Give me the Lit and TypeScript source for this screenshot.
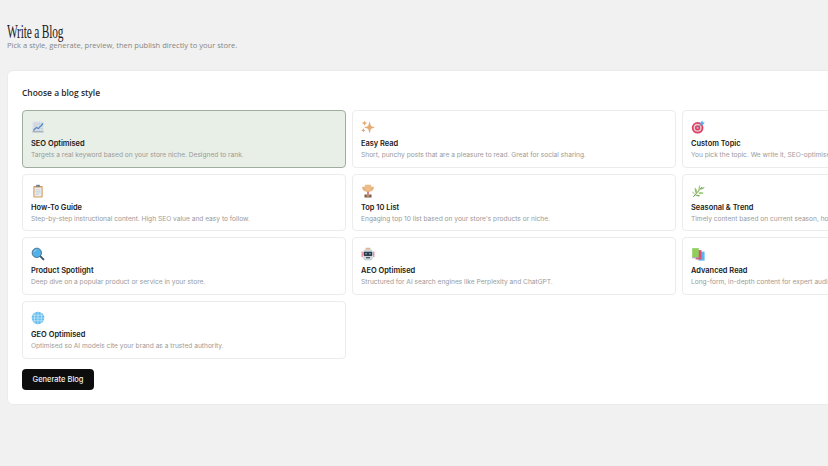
import { LitElement, html, css, svg } from "lit";
import { customElement } from "lit/decorators.js";

const icons: Record<string, unknown> = {
  chart: svg`<rect x="2" y="2" width="14" height="14" fill="#dfe4ea"/>
    <path d="M5 2v14M8 2v14M11 2v14M14 2v14M2 5h14M2 8h14M2 11h14" stroke="#b9c1cb" stroke-width=".5"/>
    <rect x="2" y="14" width="14" height="2" fill="#a9b3bf"/>
    <path d="M3 13.500 7 9.500l2.500 1.500L15.500 4.500" fill="none" stroke="#4a86c8" stroke-width="1.500"/>`,
  sparkle: svg`<path d="M11 1.500 12.800 7.700 18 9.500 12.800 11.300 11 17.500 9.200 11.300 4 9.500 9.200 7.700z" fill="#e2ac72"/>
    <path d="M4.500 .5l1 2.500 2.500 1-2.500 1-1 2.500-1-2.500L1 4l2.500-1z" fill="#e2ac72"/>
    <path d="M3 10.500l.9 1.900 1.900.9-1.900.9-.9 1.900-.9-1.900-1.900-.9 1.900-.9z" fill="#d9a36b"/>`,
  target: svg`<circle cx="8.500" cy="10" r="7.500" fill="#dd3f66"/><circle cx="8.500" cy="10" r="5.200" fill="#eec9d0"/>
    <circle cx="8.500" cy="10" r="3.400" fill="#dd3f66"/><circle cx="8.500" cy="10" r="1.300" fill="#eec9d0"/>
    <path d="M8.500 10 14 4.500" stroke="#4a7fa8" stroke-width="1"/>
    <path d="M12 3.500 14.500 .8l.7 2 2.500.5-2.500 3-2.700-.5z" fill="#55b4ec"/>`,
  clipboard: svg`<rect x="3" y="2.500" width="12" height="15" rx="1" fill="#d79f5f"/>
    <rect x="4.500" y="4.500" width="9" height="11.500" fill="#e9edf1"/>
    <path d="M6 7.500h6M6 9.500h6M6 11.500h6M6 13.500h4" stroke="#b7c0c9" stroke-width=".7"/>
    <rect x="6.500" y="1" width="5" height="3" rx=".8" fill="#7b8690"/>`,
  trophy: svg`<path d="M1.500 3.500h15c0 3.500-1.500 5.500-5 6H6.500c-3.500-.5-5-2.500-5-6z" fill="#e3b27f"/>
    <path d="M5 1h8v5c0 2.500-1.500 4.500-4 4.500S5 8.500 5 6z" fill="#ecbd88"/>
    <rect x="8" y="10" width="2" height="3" fill="#d9556c"/>
    <path d="M4.500 13.500h9V17.500h-9z" fill="#7d5a44"/><rect x="7" y="14.700" width="4" height="1.400" fill="#d8b48c"/>`,
  herb: svg`<path d="M3 16.500 14 4" stroke="#5f7f4c" stroke-width="1.200"/>
    <path d="M7 12.500C4.500 10.500 4.500 7.500 5 4.500 7.500 6.500 8.500 9.500 7 12.500z" fill="#8fc46a"/>
    <path d="M10 9C9 6.500 9.800 3.500 11 1c1.300 2.500 1 5.500-1 8z" fill="#a3d07e"/>
    <path d="M12 7c1.500-2 3.500-3 5.500-3-.5 2-2.800 3.800-5.500 3z" fill="#8fc46a"/>
    <path d="M9 11.500c2.500-1.500 5-1.500 7.500 0-2.500 2-5 2-7.500 0z" fill="#a3d07e"/>
    <path d="M5.500 14.500c2-1 4.500-.8 6.500.5-2 1.500-4.500 1.300-6.500-.5z" fill="#7fb55e"/>
    <path d="M5 13.500C3 13 1.500 11.500 1 9.500c2 0 4 1.500 4 4z" fill="#c9d8b8"/>`,
  search: svg`<path d="M11.500 11.500 16 16" stroke="#3f5566" stroke-width="2.400" stroke-linecap="round"/>
    <circle cx="7.500" cy="7.500" r="6" fill="#55b0e6" stroke="#3f6f8f" stroke-width="1.200"/>
    <path d="M4 6.500A4 4 0 0 1 7 3.500" fill="none" stroke="#a8dcf5" stroke-width="1"/>`,
  robot: svg`<path d="M1.500 6v7M16.500 6v7" stroke="#d9556c" stroke-width="1.200"/>
    <rect x="6" y="1" width="6" height="2.500" fill="#e3b27f"/>
    <rect x="3" y="3" width="12" height="14.500" rx="3" fill="#cdd5dc"/>
    <rect x="3.500" y="6" width="11" height="5.500" rx="1" fill="#2f3d4c"/>
    <circle cx="6.500" cy="8.700" r="1" fill="#9fc3dd"/><circle cx="11.500" cy="8.700" r="1" fill="#9fc3dd"/>
    <rect x="6.500" y="13" width="5" height="1.500" fill="#3e4c5a"/>`,
  books: svg`<rect x="9.500" y="6" width="8" height="11.500" fill="#5db7ec"/>
    <rect x="6" y="4" width="7.500" height="12" fill="#dd4f75"/>
    <rect x="1.500" y="1.500" width="8.500" height="11.500" fill="#8fcf5c"/>
    <rect x="1.500" y="13" width="8.500" height="1.500" fill="#a9a2ad"/>`,
  globe: svg`<circle cx="9" cy="9" r="8" fill="#63bdee"/>
    <path d="M1 9h16M2 5.500h14M2 12.500h14M9 1v16M5.500 2c-1.500 4.500-1.500 9.500 0 14M12.500 2c1.500 4.500 1.500 9.500 0 14" fill="none" stroke="#d6eefb" stroke-width=".8"/>`,
};

const styles_list = [
  { icon: "chart", name: "SEO Optimised", desc: "Targets a real keyword based on your store niche. Designed to rank.", on: true },
  { icon: "sparkle", name: "Easy Read", desc: "Short, punchy posts that are a pleasure to read. Great for social sharing." },
  { icon: "target", name: "Custom Topic", desc: "You pick the topic. We write it, SEO-optimised and ready to publish." },
  { icon: "clipboard", name: "How-To Guide", desc: "Step-by-step instructional content. High SEO value and easy to follow." },
  { icon: "trophy", name: "Top 10 List", desc: "Engaging top 10 list based on your store's products or niche." },
  { icon: "herb", name: "Seasonal & Trend", desc: "Timely content based on current season, holidays and trends." },
  { icon: "search", name: "Product Spotlight", desc: "Deep dive on a popular product or service in your store." },
  { icon: "robot", name: "AEO Optimised", desc: "Structured for AI search engines like Perplexity and ChatGPT." },
  { icon: "books", name: "Advanced Read", desc: "Long-form, in-depth content for expert audiences." },
  { icon: "globe", name: "GEO Optimised", desc: "Optimised so AI models cite your brand as a trusted authority." },
];

@customElement("app-root")
export class AppRoot extends LitElement {
  static styles = css`
    :host {
      display: block;
      width: 828px;
      height: 466px;
      overflow: hidden;
      background: #f1f1f1;
      font-family: Inter, "Liberation Sans", sans-serif;
    }
    .page {
      padding: 24px 0 0 7px;
      width: 1100px;
    }
    h1 {
      margin: 0;
      height: 17px;
      font: 400 19px/16px "Liberation Serif", serif;
      color: #1c1c1c;
      letter-spacing: -0.3px;
      transform: scaleX(0.6);
      transform-origin: left center;
    }
    .sub {
      margin: 0 0 21px;
      height: 8px;
      font: 400 7.55px/8px "Open Sans", sans-serif;
      color: #858585;
    }
    .panel {
      box-sizing: border-box;
      height: 335px;
      padding: 17px 14px;
      background: #fff;
      border: 1px solid #ebebeb;
      border-radius: 6px;
    }
    h2 {
      margin: 0 0 12px;
      height: 10px;
      font: 600 8.45px/10px "Open Sans", sans-serif;
      color: #2a2a2a;
    }
    .grid {
      display: grid;
      grid-template-columns: repeat(3, 324px);
      grid-auto-rows: 57.67px;
      gap: 6px;
    }
    .card {
      box-sizing: border-box;
      padding: 9px 8px;
      border: 1px solid #ececec;
      border-radius: 4px;
      overflow: hidden;
      white-space: nowrap;
    }
    .card.on {
      background: #e8efe7;
      border-color: #9fae9e;
    }
    .card svg {
      display: block;
      width: 14px;
      height: 14px;
      margin-bottom: 4px;
    }
    .name {
      height: 11px;
      font-size: 7.45px;
      line-height: 11px;
      font-weight: 600;
      color: #1a1a1a;
    }
    .desc {
      margin-top: 1px;
      height: 10px;
      font-size: 6.62px;
      line-height: 10px;
      color: #9a9a9a;
    }
    button {
      display: block;
      width: 72px;
      height: 21px;
      margin-top: 10px;
      padding: 0;
      border: 0;
      border-radius: 4px;
      background: #0d0d0d;
      color: #f2f2f2;
      font: 500 7.5px/21px Inter, sans-serif;
    }
  `;

  render() {
    return html`
      <div class="page">
        <h1>Write a Blog</h1>
        <p class="sub">Pick a style, generate, preview, then publish directly to your store.</p>
        <section class="panel">
          <h2>Choose a blog style</h2>
          <div class="grid">
            ${styles_list.map(
              (s) => html`
                <div class="card ${s.on ? "on" : ""}">
                  <svg viewBox="0 0 18 18">${icons[s.icon]}</svg>
                  <div class="name">${s.name}</div>
                  <div class="desc">${s.desc}</div>
                </div>
              `
            )}
          </div>
          <button>Generate Blog</button>
        </section>
      </div>
    `;
  }
}
